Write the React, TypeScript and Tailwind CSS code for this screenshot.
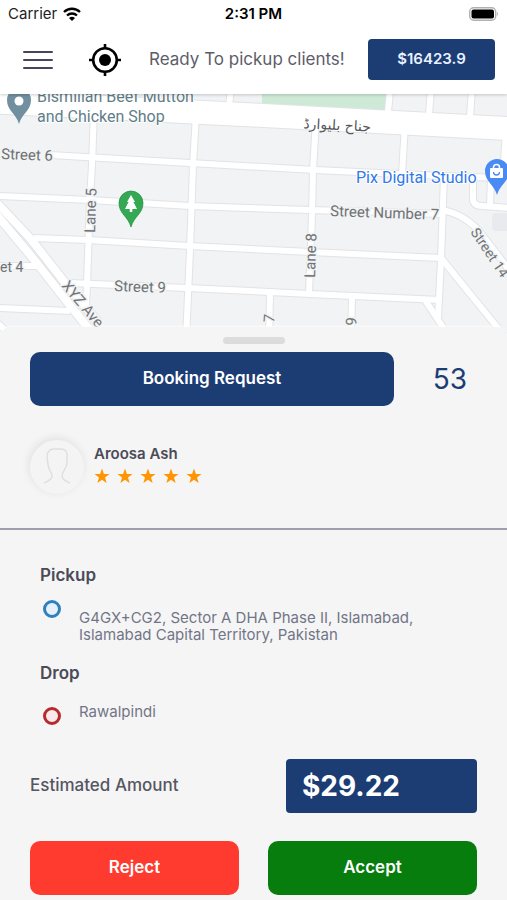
const roads = [
  "M50 155 L190 163 L315 170 L443 176 L503 178",
  "M0 196 L90 200 L190 206 L310 210 L442 214",
  "M34 238 L88 240 L190 246 L310 252 L441 258",
  "M70 283 L187 288 L310 294 L440 300",
  "M0 308 L70 311",
  "M0 266 L36 266",
  "M94 110 L92 165 L90 200 L87 284 L86 306",
  "M196 115 L193 165 L190 250 L186 340",
  "M316 120 L313 170 L312 215 L309 293",
  "M405 125 L402 174",
  "M506 130 L503 178",
  "M444 176 L441 260 L438 318",
  "M442 210 Q464 214 480 232 L520 284",
  "M441 258 L506 338",
  "M425 300 L450 338",
  "M270 294 L269 340",
  "M352 298 L351 340",
  "M473 178 L473 200 Q474 206 482 206 L510 208",
  "M491 178 L490 206",
  "M231 90 L229 105",
  "M390 90 L388 112",
  "M431 90 L429 114",
  "M472 90 L470 116",
  "M-4 322 L12 336",
];

const avenue = ["M-4 202 L30 238 L66 284 L98 322", "M-4 214 L36 262 L72 308 L98 340"];

const MapView = () => (
  <svg
    viewBox="0 94 507 244"
    preserveAspectRatio="xMidYMid slice"
    className="block h-[244px] w-full bg-[#f1f3f4] font-[Roboto,sans-serif] text-[15px]"
    role="img"
    aria-label="Map of nearby streets"
  >
    <path d="M262 90H388V112L262 106Z" fill="#ceead6" />
    <g fill="none" stroke="#e1e3e5">
      {roads.map((d) => <path key={d} d={d} strokeWidth="8" />)}
      {avenue.map((d) => <path key={d} d={d} strokeWidth="10" />)}
      <path d="M-5 102 L253 115 L515 129" strokeWidth="25" />
    </g>
    <g fill="none" stroke="#fff">
      {roads.map((d) => <path key={d} d={d} strokeWidth="6" />)}
      {avenue.map((d) => <path key={d} d={d} strokeWidth="8" />)}
      <path d="M-5 102 L253 115 L515 129" strokeWidth="23" />
    </g>
    <rect x="492" y="213" width="20" height="18" rx="4" fill="#e8eaed" />

    <g className="fill-[#707275] stroke-[#f1f3f4] stroke-[3px] [paint-order:stroke]">
      <text transform="translate(1 159) rotate(2)">Street 6</text>
      <text transform="translate(0 272)" className="text-[14px]">et 4</text>
      <text transform="translate(114 291) rotate(2)">Street 9</text>
      <text transform="translate(330 216) rotate(2)">Street Number 7</text>
      <text transform="translate(95 233) rotate(-88)">Lane 5</text>
      <text transform="translate(315 278) rotate(-88)">Lane 8</text>
      <text transform="translate(61 286) rotate(50)">XYZ Ave</text>
      <text transform="translate(470 232) rotate(56)" className="text-[14px]">Street 14</text>
      <text transform="translate(274 323) rotate(-85)">7</text>
      <text transform="translate(346 317) rotate(92)">6</text>
    </g>
    <text
      transform="translate(337 130) rotate(3)"
      textAnchor="middle"
      className="fill-[#55575b] font-['DejaVu_Sans',sans-serif] text-[14px]"
    >
      جناح بلیوارڈ
    </text>
    <g className="fill-[#5f7d88] stroke-white stroke-2 text-[16px] [paint-order:stroke]">
      <text x="37" y="102">Bismillah Beef Mutton</text>
      <text x="37" y="122">and Chicken Shop</text>
    </g>
    <text x="356" y="183" className="fill-[#3079e8] stroke-white stroke-2 text-[16px] [paint-order:stroke]">
      Pix Digital Studio
    </text>

    <g fill="#7090a0">
      <path d="M19 124 C16 113 7 111 7 100 A12 12 0 0 1 31 100 C31 111 22 113 19 124Z" />
      <circle cx="19" cy="101" r="4.5" fill="#fff" />
    </g>
    <g fill="#34a853" stroke="#1e8e3e" strokeWidth=".7">
      <path d="M131 227 C128 216 119 214 119 203 A12 12 0 0 1 143 203 C143 214 134 216 131 227Z" />
      <path d="M131 195 L127 202 H128.500 L125 209 H129.700 V212 H132.300 V209 H137 L133.500 202 H135Z" fill="#fff" stroke="none" />
    </g>
    <g fill="#4a8af4">
      <path d="M497 195 C494 184 485 182 485 171 A12 12 0 0 1 509 171 C509 182 500 184 497 195Z" />
      <rect x="490" y="168" width="13" height="10" rx="1" fill="#fff" />
      <path d="M493.500 169 V167.500 A3 3 0 0 1 499.500 167.500 V169" fill="none" stroke="#fff" strokeWidth="1.500" />
      <path d="M493.500 172 A3 3 0 0 0 499.500 172" fill="none" stroke="#4a8af4" strokeWidth="1.300" />
    </g>
  </svg>
);

const StatusBar = () => (
  <div className="grid h-7 grid-cols-3 items-center px-2 text-[#222]">
    <div className="flex items-center gap-1.5">
      <span className="text-[15px]">Carrier</span>
      <svg viewBox="0 0 18 14" className="h-3.5 w-[18px]" fill="none" stroke="#000" strokeWidth="2.4">
        <path d="M1 5 A11.500 11.500 0 0 1 17 5" />
        <path d="M4 8.500 A7.300 7.300 0 0 1 14 8.500" />
        <path d="M9 14 L6 11 A4.500 4.500 0 0 1 12 11Z" fill="#000" stroke="none" />
      </svg>
    </div>
    <span className="text-center text-[15px] font-semibold text-black">2:31 PM</span>
    <svg viewBox="0 0 30 14" className="h-3.5 w-[30px] justify-self-end">
      <rect x=".7" y=".7" width="26" height="12.600" rx="4" fill="#fff" stroke="#b0b0b0" strokeWidth="1.400" />
      <rect x="2.500" y="2.500" width="22.500" height="9" rx="2" />
      <path d="M28 5 Q30 7 28 9Z" fill="#b0b0b0" />
    </svg>
  </div>
);

const Header = () => (
  <header className="flex h-[66px] items-center pr-3 pb-[3px] pl-[23px]">
    <button aria-label="Menu" className="flex w-[30px] flex-col gap-1.5">
      <span className="h-0.5 rounded bg-[#47455c]"></span>
      <span className="h-0.5 rounded bg-[#47455c]"></span>
      <span className="h-0.5 rounded bg-[#47455c]"></span>
    </button>
    <button aria-label="My location" className="ml-9">
      <svg viewBox="0 0 32 32" className="size-8" fill="none" stroke="#000" strokeWidth="2.600">
        <circle cx="16" cy="16" r="11.800" />
        <circle cx="16" cy="16" r="6" fill="#000" stroke="none" />
        <path d="M16 0V5M16 27V32M0 16H5M27 16H32" />
      </svg>
    </button>
    <p className="ml-7 flex-1 text-[17px] whitespace-nowrap text-[#5c5d69]">Ready To pickup clients!</p>
    <button className="h-[41px] w-[127px] rounded bg-[#1c3d74] text-[15px] font-semibold text-[#e9f2ff]">
      $16423.9
    </button>
  </header>
);

const Star = () => (
  <svg viewBox="0 0 16 16" className="size-4" fill="#ff9500">
    <path d="M8 .5 L9.900 5.900 L15.500 6 L11 9.500 L12.600 15 L8 11.700 L3.400 15 L5 9.500 L.5 6 L6.100 5.900Z" />
  </svg>
);

const Rider = () => (
  <div className="mt-[34px] flex items-start px-[30px]">
    <svg
      viewBox="0 0 54 54"
      className="size-[54px] rounded-full bg-[#f4f4f4] shadow-[-1px_-2px_10px_rgba(0,0,0,0.09)]"
      fill="none"
      stroke="#dedede"
      strokeWidth="1.400"
    >
      <path d="M14 43 C18 41 22 40 22 36 C22 32 18 30 18 24 L17 17 C17 11 20 9 24 9 H31 C35 9 38 12 37 17 L37 23 C37 28 32 32 32 36 C32 40 36 41 40 43" />
    </svg>
    <div className="ml-2.5 pt-1">
      <p className="text-[15px] leading-5 font-semibold text-[#4b4b58]">Aroosa Ash</p>
      <div className="mt-1 flex gap-[7px]" role="img" aria-label="5 stars">
        {[1, 2, 3, 4, 5].map((n) => <Star key={n} />)}
      </div>
    </div>
  </div>
);

const App = () => {
  return (
    <div className="min-h-screen bg-[#f5f5f5] font-[Inter,sans-serif]">
      <div className="relative bg-white shadow-[0_1px_3px_rgba(0,0,0,0.2)]">
        <StatusBar />
        <Header />
      </div>
      <MapView />

      <main className="relative -mt-[11px] rounded-t-[10px] bg-[#f5f5f5] pt-2.5 pb-1.5 shadow-[0_-1px_3px_rgba(255,255,255,0.8)]">
        <div className="mx-auto h-[7px] w-[62px] rounded-full bg-[#dcdcdc]"></div>

        <div className="mt-2 flex items-center gap-[29px] px-[30px]">
          <button className="h-[54px] flex-1 rounded-[10px] bg-[#1c3d74] text-[17px] font-semibold text-white">
            Booking Request
          </button>
          <span className="w-[54px] text-center text-[28px] text-[#1c3d74]">53</span>
        </div>

        <Rider />

        <hr className="mt-[34px] border-t-2 border-[#9d9fad]" />

        <section className="px-10 pt-[33px] text-[15px] leading-[17px] text-[#727587]">
          <h2 className="text-[17px] leading-6 font-semibold text-[#4b4b58]">Pickup</h2>
          <div className="mt-[13px] flex gap-[18px] pl-[3px]">
            <span className="size-[18px] shrink-0 rounded-full border-[3px] border-[#3080be] bg-[#e6f0fa]"></span>
            <p className="pt-[9px]">
              G4GX+CG2, Sector A DHA Phase II, Islamabad, Islamabad Capital Territory, Pakistan
            </p>
          </div>
          <h2 className="mt-[18px] text-[17px] leading-6 font-semibold text-[#4b4b58]">Drop</h2>
          <div className="mt-[18px] flex gap-[18px] pl-[3px]">
            <span className="mt-1 size-[18px] shrink-0 rounded-full border-[3px] border-[#b52c2e] bg-[#fae8ec]"></span>
            <p>Rawalpindi</p>
          </div>
        </section>

        <div className="mt-[34px] flex items-center justify-between px-[30px]">
          <span className="text-[17px] font-medium text-[#555662]">Estimated Amount</span>
          <output className="flex h-[54px] w-[191px] items-center rounded bg-[#1c3d74] px-4 text-[28px] font-bold text-white">
            $29.22
          </output>
        </div>

        <div className="mt-7 grid grid-cols-2 gap-[29px] px-[30px]">
          <button className="h-[54px] rounded-[10px] bg-[#ff3b30] text-[17px] font-semibold text-white">Reject</button>
          <button className="h-[54px] rounded-[10px] bg-[#067d0c] text-[17px] font-semibold text-white">Accept</button>
        </div>
      </main>
    </div>
  );
};

export default App;
